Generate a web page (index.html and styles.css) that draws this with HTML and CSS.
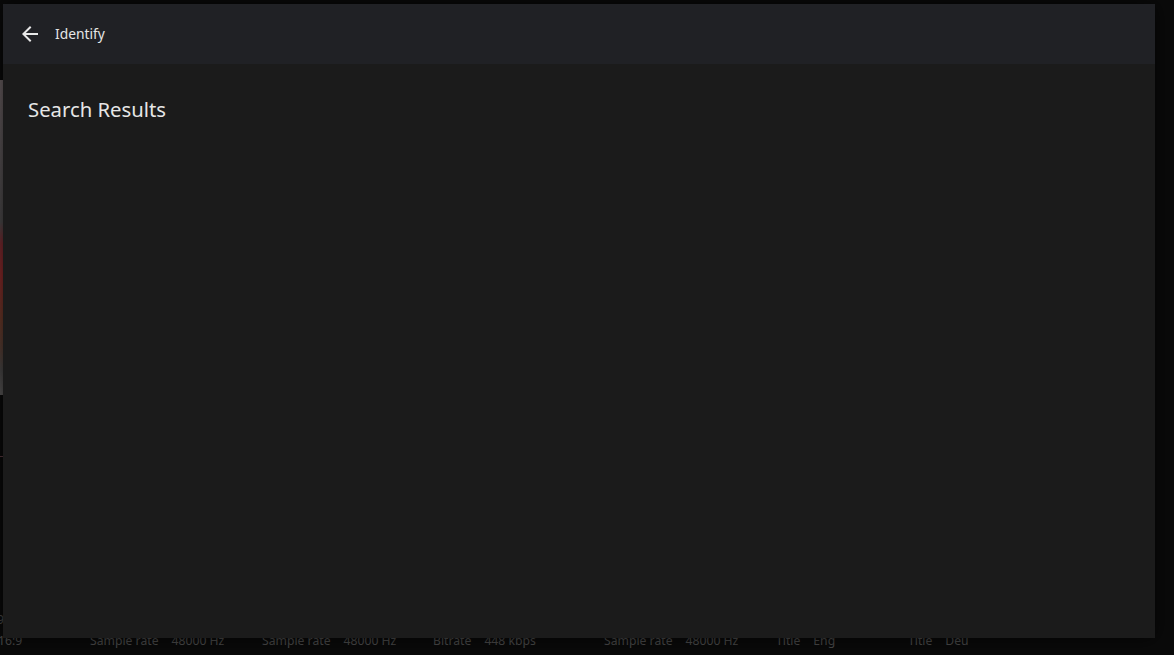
FILE: index.html
```html
<!DOCTYPE html>
<html lang="en">
<head>
<meta charset="utf-8">
<title>Identify</title>
<link rel="stylesheet" href="styles.css">
</head>
<body>
<div class="page">
  <div class="poster"></div>
  <div class="line-mark"></div>
  <div class="stream-row row-a">
    <div class="col c0"><span class="val">9</span></div>
  </div>
  <div class="stream-row row-b">
    <div class="col c0"><span class="val">16:9</span></div>
    <div class="col c1"><span class="lbl">Sample rate</span><span class="val">48000 Hz</span></div>
    <div class="col c2"><span class="lbl">Sample rate</span><span class="val">48000 Hz</span></div>
    <div class="col c3"><span class="lbl">Bitrate</span><span class="val">448 kbps</span></div>
    <div class="col c4"><span class="lbl">Sample rate</span><span class="val">48000 Hz</span></div>
    <div class="col c5"><span class="lbl">Title</span><span class="val">Eng</span></div>
    <div class="col c6"><span class="lbl">Title</span><span class="val">Deu</span></div>
  </div>
  <div class="stream-row row-c">
    <div class="col c0"></div>
    <div class="col c1"><span class="lbl">Profile</span></div>
    <div class="col c2"><span class="lbl">Bit depth</span><span class="val">16 bit</span></div>
    <div class="col c3"><span class="lbl">Channels</span></div>
    <div class="col c4"><span class="lbl">Profile</span></div>
  </div>
</div>

<div class="dialog">
  <div class="dialog-header">
    <button class="back-btn" aria-label="Back">
      <svg viewBox="0 0 24 24" width="24" height="24"><path d="M20 11H7.83l5.59-5.59L12 4l-8 8 8 8 1.41-1.41L7.83 13H20v-2z" fill="currentColor"/></svg>
    </button>
    <h3 class="dialog-title">Identify</h3>
  </div>
  <div class="dialog-content">
    <h1 class="section-title">Search Results</h1>
  </div>
</div>
</body>
</html>
```

FILE: styles.css
```css
html, body {
  margin: 0;
  padding: 0;
  height: 100%;
}
body {
  background: #0a0a0a;
  font-family: "Noto Sans", "Open Sans", sans-serif;
  overflow: hidden;
  position: relative;
}
.page {
  position: relative;
  height: 100%;
}
.poster {
  position: absolute;
  left: 0;
  top: 80px;
  width: 3px;
  height: 315px;
  background: linear-gradient(to bottom,
    #6a6062 0%, #5c5658 20%, #4c4a4b 45%,
    #7a2a30 52%, #8a2a2a 62%, #6b3a2a 76%,
    #5a4036 85%, #4a4848 92%, #5a5858 100%);
}
.line-mark {
  position: absolute;
  left: 0;
  top: 456px;
  width: 3px;
  height: 1px;
  background: #5a3a40;
}
.stream-row {
  position: absolute;
  left: 0;
  display: flex;
  font-size: 12.2px;
  color: #4a4a4a;
  white-space: nowrap;
  line-height: 16px;
}
.row-a { top: 612px; left: -3px; }
.row-b { top: 633px; left: -2px; }
.row-c { top: 653px; }
.col { display: flex; gap: 13px; }
.c0 { width: 92px; }
.c1 { width: 172px; }
.c2 { width: 171px; }
.c3 { width: 171px; }
.c4 { width: 172px; }
.c5 { width: 132px; }
.c6 { width: 120px; }
.lbl, .val { color: #4a4a4a; }

.dialog {
  position: absolute;
  left: 3px;
  top: 4px;
  width: 1152px;
  height: 634px;
  background: #1b1b1b;
  box-shadow: 0 0 18px rgba(0, 0, 0, 0.7);
  display: flex;
  flex-direction: column;
  color: #e6e6e6;
}
.dialog-header {
  height: 60px;
  flex: 0 0 60px;
  background: #202125;
  display: flex;
  align-items: center;
  padding-left: 15px;
  padding-bottom: 1px;
  box-sizing: border-box;
}
.back-btn {
  background: none;
  border: 0;
  padding: 0;
  width: 24px;
  height: 24px;
  color: #e8e8e8;
  display: flex;
  align-items: center;
  justify-content: center;
}
.back-btn svg { display: block; }
.dialog-title {
  margin: 0 0 0 13px;
  font-size: 13.8px;
  font-weight: 400;
  color: #e6e6e6;
}
.dialog-content {
  padding: 29px 25px;
}
.section-title {
  margin: 0;
  font-size: 20.3px;
  font-weight: 400;
  color: #e6e6e6;
  line-height: 32px;
}
```
